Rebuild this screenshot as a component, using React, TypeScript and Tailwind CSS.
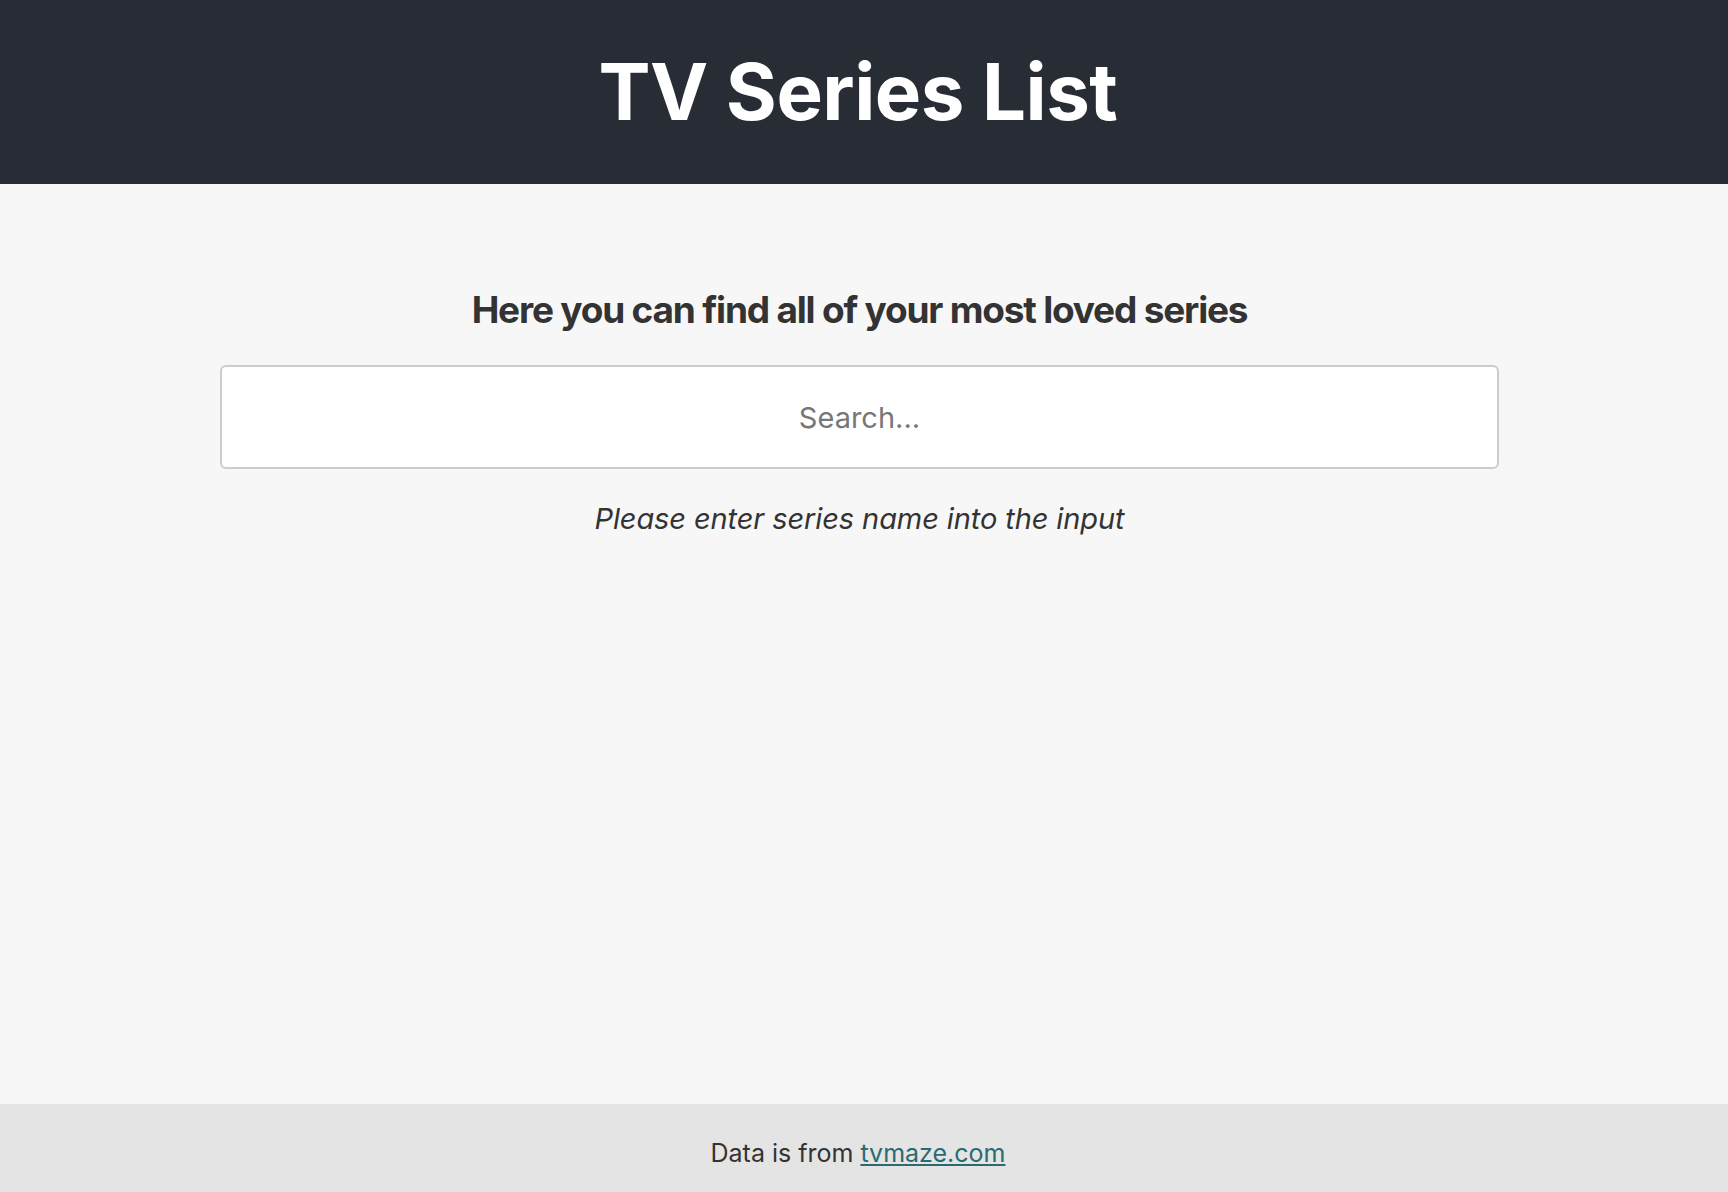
export default function App() {
  return (
    <div className="flex min-h-screen flex-col font-['Inter',sans-serif] text-[#333333]">
      <header className="flex h-[184px] items-center justify-center bg-[#282c34] pr-[12px]">
        <h1 className="text-[78px] font-bold leading-none tracking-[-0.5px] text-white">TV Series List</h1>
      </header>

      <main className="flex flex-1 flex-col items-center bg-[#f7f7f7] pl-[220px] pr-[229px] pt-[104px]">
        <h2 className="text-[37px] font-bold leading-[43px] tracking-[-1.2px]">
          Here you can find all of your most loved series
        </h2>
        <input
          type="text"
          placeholder="Search..."
          className="mt-[34px] h-[104px] w-full rounded-md border-2 border-[#cccccc] bg-white px-4 text-center text-[29px] text-[#333333] outline-none placeholder:text-[#777777]"
        />
        <p className="mt-[30px] text-[29px] italic leading-[40px] tracking-[-0.1px]">
          Please enter series name into the input
        </p>
      </main>

      <footer className="flex h-[88px] items-center justify-center bg-[#e4e4e4] pr-[12px] pt-[12px] text-[25px]">
        <span>
          Data is from{" "}
          <a href="#" className="text-[#2a6b72] underline">
            tvmaze.com
          </a>
        </span>
      </footer>
    </div>
  );
}
